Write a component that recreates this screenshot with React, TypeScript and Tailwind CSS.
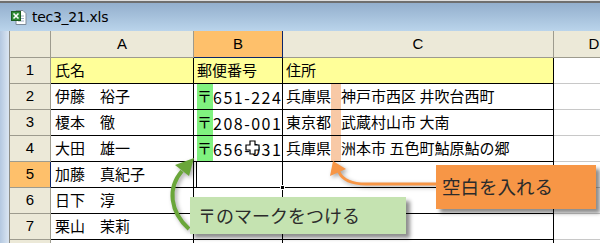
import React from 'react';

const jp = '[font-family:"Noto_Sans_CJK_JP","Noto_Sans_CJK_SC",sans-serif]';

const names = ['氏名', '伊藤　裕子', '榎本　徹', '大田　雄一', '加藤　真紀子', '日下　淳', '栗山　茉莉'];
const zips = ['', '651-2242', '208-0011', '656-0314', '', '', ''];
const addrs: [string, string][] = [
  ['', ''],
  ['兵庫県', '神戸市西区 井吹台西町'],
  ['東京都', '武蔵村山市 大南'],
  ['兵庫県', '洲本市 五色町鮎原鮎の郷'],
  ['', ''],
  ['', ''],
  ['', '']
];

function ExcelIcon() {
  return (
    <svg width="16" height="16" viewBox="0 0 16 16">
      <path d="M5 1.5h7l3 3v11H5z" fill="#fff" stroke="#7d8a99" />
      <path d="M7 7h6M7 9.5h6M7 12h6" stroke="#9fb0c4" />
      <rect x="0.5" y="2.5" width="9" height="9" fill="#2f8a35" stroke="#1d5e22" />
      <path d="M2.5 4.5l5 5M7.5 4.5l-5 5" stroke="#fff" strokeWidth="1.6" />
    </svg>
  );
}

export default function App() {
  return (
    <div className={`relative w-[600px] h-[243px] overflow-hidden bg-[#dedede] pt-[1px] ${jp}`}>
      {/* title bar */}
      <div className="h-[30px] border-t-2 border-[#6f6f6f] bg-linear-to-b from-[#93afcd] to-[#bad4eb] flex items-center pl-[11px] gap-[5px]">
        <ExcelIcon />
        <span className="text-[14px] text-black [font-family:'DejaVu_Sans',sans-serif] tracking-[-0.3px]">tec3_21.xls</span>
      </div>

      <div className="flex">
        <div className="w-[10px] shrink-0 bg-linear-to-r from-[#b4c8e0] to-[#dbe6f2] border-r border-[#8d8d86]" />
        <div className="flex flex-col">
          {/* column headers */}
          <div className="flex h-[27px] bg-[#ece9d8] text-[15px] text-black [font-family:'Liberation_Sans',sans-serif]">
            <div className="w-[41px] border-r border-b border-[#9d9b8e]" />
            <div className="w-[143px] border-r border-b border-[#9d9b8e] flex items-center justify-center">A</div>
            <div className="w-[89px] bg-[#fec06b] border-r border-b border-[#0a246a] flex items-center justify-center">B</div>
            <div className="w-[271px] border-r border-b border-[#9d9b8e] flex items-center justify-center">C</div>
            <div className="w-[80px] shrink-0 border-b border-[#9d9b8e] flex items-center justify-center">D</div>
          </div>

          {names.map((name, i) => {
            const yellow = i === 0 ? 'bg-[#ffff99]' : 'bg-white';
            const active = i === 4;
            return (
              <div key={i} className="flex h-[26px] text-[15px] text-black">
                <div
                  className={`w-[41px] shrink-0 border-r border-b flex items-center justify-center [font-family:'Liberation_Sans',sans-serif] ${
                    active ? 'bg-[#fec06b] border-r-[#0a246a] border-b-[#9d9b8e]' : 'bg-[#ece9d8] border-[#9d9b8e]'
                  }`}
                >
                  {i + 1}
                </div>
                <div className={`w-[143px] shrink-0 border-r border-b border-black flex items-center pl-[4px] whitespace-nowrap ${yellow}`}>
                  {name}
                </div>
                <div className={`relative w-[89px] shrink-0 border-r border-b border-black flex items-stretch pl-[3px] whitespace-nowrap overflow-hidden ${yellow}`}>
                  {i === 0 && <span className="flex items-center">郵便番号</span>}
                  {zips[i] && (
                    <>
                      <span className="w-[16px] shrink-0 bg-[#80f27f] flex items-center">〒</span>
                      <span className="flex items-center text-[16px] tracking-[1.5px]">{zips[i]}</span>
                    </>
                  )}
                  {active && <div className="absolute inset-y-0 left-[2px] w-[1px] bg-black" />}
                </div>
                <div className={`w-[271px] shrink-0 border-r border-b border-black flex items-stretch pl-[3px] whitespace-nowrap ${yellow}`}>
                  {i === 0 && <span className="flex items-center">住所</span>}
                  {addrs[i][0] && (
                    <>
                      <span className="flex items-center">{addrs[i][0]}</span>
                      <span className="w-[10px] shrink-0 bg-[#f8c9a6]" />
                      <span className="flex items-center">{addrs[i][1]}</span>
                    </>
                  )}
                </div>
                <div className="w-[80px] shrink-0 border-b border-[#c8c8c8] bg-white" />
              </div>
            );
          })}
          <div className="flex h-[10px]">
            <div className="w-[41px] shrink-0 bg-[#ece9d8] border-r border-[#9d9b8e]" />
            <div className="w-[143px] shrink-0 border-r border-black bg-white" />
            <div className="w-[89px] shrink-0 border-r border-black bg-white" />
            <div className="w-[271px] shrink-0 border-r border-black bg-white" />
            <div className="w-[80px] shrink-0 bg-white" />
          </div>
        </div>
      </div>

      {/* fill handle */}
      <div className="absolute left-[280px] top-[185px] w-[5px] h-[5px] bg-black border border-white" />

      {/* mouse cursor */}
      <svg className="absolute left-[245px] top-[140px]" width="15" height="15" viewBox="0 0 15 15">
        <path d="M5 1h5v4h4v5h-4v4H5v-4H1V5h4z" fill="#fff" stroke="#000" strokeWidth="1.2" />
      </svg>

      {/* arrows */}
      <svg className="absolute inset-0 pointer-events-none drop-shadow-[2px_2px_2px_rgba(0,0,0,0.35)]" width="600" height="243">
        <path d="M189 229 C170 212 167 188 182 171" fill="none" stroke="#6aa63a" strokeWidth="4" />
        <polygon points="194,158 175,165 189,176" fill="#6aa63a" />
        <path d="M437 184 L366 184 C352 184 343 181 339 172" fill="none" stroke="#f79646" strokeWidth="3" />
        <polygon points="333,161 330,176 346,169" fill="#f79646" />
      </svg>

      {/* callouts */}
      <div className="absolute left-[190px] top-[197px] w-[216px] h-[37px] bg-[#c5e3b1] shadow-[4px_4px_4px_rgba(0,0,0,0.45)] flex items-center pl-[8px] text-[18px] text-[#2b2b2b] whitespace-nowrap">
        〒のマークをつける
      </div>
      <div className="absolute left-[436px] top-[165px] w-[160px] h-[44px] bg-[#f79646] shadow-[4px_4px_4px_rgba(0,0,0,0.45)] flex items-center pl-[6px] text-[18.5px] text-[#2b2b2b] whitespace-nowrap">
        空白を入れる
      </div>
    </div>
  );
}
